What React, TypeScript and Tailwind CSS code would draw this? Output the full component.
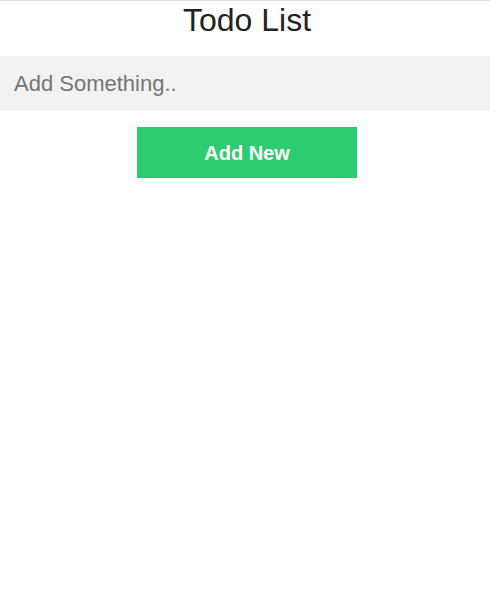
export default function App() {
  return (
    <div className="min-h-[602px] bg-white border-t border-[#dddddd] font-['Liberation_Sans',Arial,sans-serif]">
      <h1 className="text-center text-[32px] leading-[36px] text-[#222222] pt-[1px] pb-[18px] pl-1">Todo List</h1>
      <input
        type="text"
        placeholder="Add Something.."
        className="block w-full h-[55px] bg-[#f2f2f2] px-[14px] text-[22px] text-[#333333] placeholder:text-[#757575] outline-none"
      />
      <div className="flex justify-center pt-4 pl-1">
        <button className="w-[220px] h-[51px] bg-[#2ecc71] text-white font-bold text-[20px]">Add New</button>
      </div>
    </div>
  );
}
